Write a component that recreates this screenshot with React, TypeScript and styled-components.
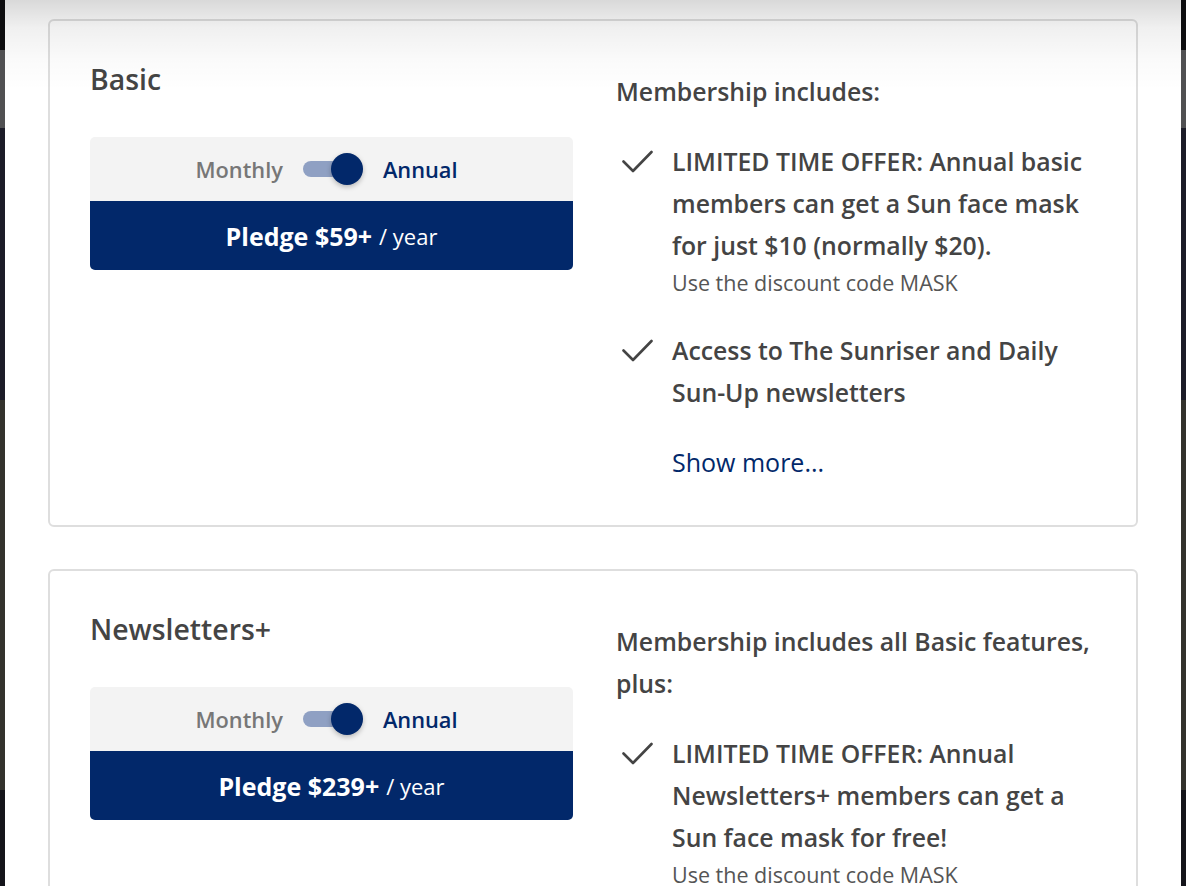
import React from "react";
import styled, { createGlobalStyle } from "styled-components";

const Global = createGlobalStyle`
  html, body { margin: 0; padding: 0; }
  body {
    font-family: "Open Sans", "Lato", sans-serif;
    background:
      linear-gradient(to bottom,
        #0d0d0f 0, #0d0d0f 50px,
        #505052 50px, #505052 128px,
        #1c1c28 128px, #1c1c28 400px,
        #33322d 400px, #33322d 790px,
        #14141a 790px, #14141a 886px);
    min-height: 886px;
  }
`;

const Panel = styled.main`
  position: relative;
  margin: 0 5px;
  background: #fff;
  height: 886px;
  overflow: hidden;
  padding: 19px 43px 0;
  box-sizing: border-box;
  display: flex;
  flex-direction: column;
  gap: 42px;
`;

const TopFade = styled.div`
  position: absolute;
  left: 0;
  right: 0;
  top: 0;
  height: 90px;
  pointer-events: none;
  background: linear-gradient(
    to bottom,
    rgba(0, 0, 0, 0.15) 0,
    rgba(0, 0, 0, 0.06) 28px,
    rgba(0, 0, 0, 0.02) 60px,
    rgba(0, 0, 0, 0) 90px
  );
`;

const Card = styled.section`
  flex: none;
  border: 2px solid #dedede;
  border-radius: 6px;
  padding: 37px 40px 42px 40px;
  display: grid;
  grid-template-columns: 483px 1fr;
  column-gap: 43px;
  color: #444;
`;

const LeftCol = styled.div`
  display: flex;
  flex-direction: column;
`;

const Title = styled.h2`
  margin: 0;
  font-size: 28.4px;
  line-height: 42px;
  font-weight: 600;
  color: #444;
`;

const PriceBox = styled.div`
  margin-top: 37px;
  border-radius: 5px;
  overflow: hidden;
`;

const ToggleRow = styled.div`
  height: 64px;
  background: #f3f3f3;
  display: flex;
  align-items: center;
  justify-content: center;
  gap: 20px;
  padding-right: 10px;
`;

const ToggleLabel = styled.span<{ $active?: boolean }>`
  font-size: 21.8px;
  font-weight: 600;
  color: ${(p) => (p.$active ? "#02286a" : "#777")};
`;

const Switch = styled.span`
  position: relative;
  width: 60px;
  height: 32px;
  flex: none;
`;

const Track = styled.span`
  position: absolute;
  left: 0;
  top: 8px;
  width: 46px;
  height: 16px;
  border-radius: 8px;
  background: #8fa0c3;
`;

const Knob = styled.span`
  position: absolute;
  right: 0;
  top: 0;
  width: 32px;
  height: 32px;
  border-radius: 50%;
  background: #02286a;
  box-shadow: 0 2px 5px rgba(0, 0, 0, 0.25);
`;

const PledgeButton = styled.button`
  display: flex;
  align-items: center;
  justify-content: center;
  width: 100%;
  height: 69px;
  border: none;
  background: #02286a;
  color: #fff;
  font-family: inherit;
  cursor: pointer;
  gap: 7px;
`;

const PledgeStrong = styled.strong`
  font-size: 25px;
  font-weight: 700;
`;

const PledgeUnit = styled.span`
  font-size: 22px;
  font-weight: 400;
`;

const RightCol = styled.div`
  padding-top: 12px;
  display: flex;
  flex-direction: column;
`;

const Heading = styled.h3`
  margin: 0 0 28px;
  font-size: 24.8px;
  line-height: 42px;
  font-weight: 600;
  color: #444;
`;

const List = styled.ul`
  list-style: none;
  margin: 0;
  padding: 0;
  display: flex;
  flex-direction: column;
  gap: 30px;
`;

const Item = styled.li`
  display: grid;
  grid-template-columns: 56px 1fr;
`;

const CheckWrap = styled.span`
  padding-top: 10px;
  padding-left: 6px;
`;

const ItemText = styled.div`
  font-size: 24.8px;
  line-height: 42px;
  font-weight: 600;
  color: #444;
`;

const SubText = styled.div`
  padding-top: 1px;
  font-size: 21.5px;
  line-height: 32px;
  font-weight: 400;
  color: #555;
`;

const ShowMore = styled.a`
  margin: 28px 0 0 56px;
  font-size: 25px;
  line-height: 42px;
  color: #02286a;
  text-decoration: none;
`;

const Check = () => (
  <svg width="31" height="23" viewBox="0 0 31 23" fill="none">
    <polyline
      points="1.5,11.5 11,21 29.5,2"
      stroke="#444"
      strokeWidth="2.6"
      strokeLinecap="round"
      strokeLinejoin="round"
    />
  </svg>
);

type Feature = { text: string; sub?: string };

const Plan = ({
  name,
  price,
  heading,
  features,
  showMore,
}: {
  name: string;
  price: string;
  heading: string;
  features: Feature[];
  showMore?: boolean;
}) => (
  <Card>
    <LeftCol>
      <Title>{name}</Title>
      <PriceBox>
        <ToggleRow>
          <ToggleLabel>Monthly</ToggleLabel>
          <Switch>
            <Track />
            <Knob />
          </Switch>
          <ToggleLabel $active>Annual</ToggleLabel>
        </ToggleRow>
        <PledgeButton>
          <PledgeStrong>Pledge {price}</PledgeStrong>
          <PledgeUnit>/ year</PledgeUnit>
        </PledgeButton>
      </PriceBox>
    </LeftCol>
    <RightCol>
      <Heading>{heading}</Heading>
      <List>
        {features.map((f) => (
          <Item key={f.text}>
            <CheckWrap>
              <Check />
            </CheckWrap>
            <div>
              <ItemText>{f.text}</ItemText>
              {f.sub && <SubText>{f.sub}</SubText>}
            </div>
          </Item>
        ))}
      </List>
      {showMore && <ShowMore href="#">Show more...</ShowMore>}
    </RightCol>
  </Card>
);

export default function App() {
  return (
    <>
      <Global />
      <Panel>
        <Plan
          name="Basic"
          price="$59+"
          heading="Membership includes:"
          features={[
            {
              text: "LIMITED TIME OFFER: Annual basic members can get a Sun face mask for just $10 (normally $20).",
              sub: "Use the discount code MASK",
            },
            { text: "Access to The Sunriser and Daily Sun-Up newsletters" },
          ]}
          showMore
        />
        <Plan
          name="Newsletters+"
          price="$239+"
          heading="Membership includes all Basic features, plus:"
          features={[
            {
              text: "LIMITED TIME OFFER: Annual Newsletters+ members can get a Sun face mask for free!",
              sub: "Use the discount code MASK",
            },
          ]}
        />
        <TopFade />
      </Panel>
    </>
  );
}
